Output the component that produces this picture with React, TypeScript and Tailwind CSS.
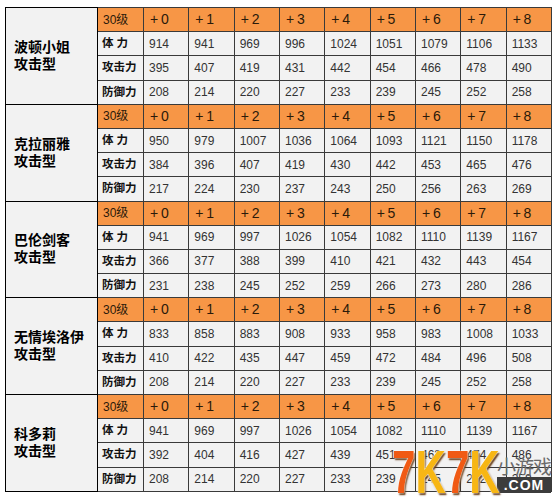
import { Fragment } from "react";

const levels = ["+0", "+1", "+2", "+3", "+4", "+5", "+6", "+7", "+8"];

interface Hero {
  name: string;
  hp: number[];
  atk: number[];
  def: number[];
}

const heroes: Hero[] = [
  {
    name: "波顿小姐",
    hp: [914, 941, 969, 996, 1024, 1051, 1079, 1106, 1133],
    atk: [395, 407, 419, 431, 442, 454, 466, 478, 490],
    def: [208, 214, 220, 227, 233, 239, 245, 252, 258],
  },
  {
    name: "克拉丽雅",
    hp: [950, 979, 1007, 1036, 1064, 1093, 1121, 1150, 1178],
    atk: [384, 396, 407, 419, 430, 442, 453, 465, 476],
    def: [217, 224, 230, 237, 243, 250, 256, 263, 269],
  },
  {
    name: "巴伦剑客",
    hp: [941, 969, 997, 1026, 1054, 1082, 1110, 1139, 1167],
    atk: [366, 377, 388, 399, 410, 421, 432, 443, 454],
    def: [231, 238, 245, 252, 259, 266, 273, 280, 286],
  },
  {
    name: "无情埃洛伊",
    hp: [833, 858, 883, 908, 933, 958, 983, 1008, 1033],
    atk: [410, 422, 435, 447, 459, 472, 484, 496, 508],
    def: [208, 214, 220, 227, 233, 239, 245, 252, 258],
  },
  {
    name: "科多莉",
    hp: [941, 969, 997, 1026, 1054, 1082, 1110, 1139, 1167],
    atk: [392, 404, 416, 427, 439, 451, 463, 474, 486],
    def: [208, 214, 220, 227, 233, 239, 245, 252, 258],
  },
];

const cell = "border border-[#3a3a3a] px-[5px] py-0 text-left align-middle whitespace-nowrap overflow-hidden";
const font = { fontFamily: '"Liberation Sans", "Noto Sans CJK SC", sans-serif' };

function StatRow({ label, values }: { label: string; values: number[] }) {
  return (
    <tr className="h-[24.2px]">
      <td
        className={`${cell} !px-[4px] bg-[#f2f2f2] font-bold text-[11.5px] text-[#111] ${label.length === 2 ? "tracking-[3px]" : "tracking-[0px]"}`}
      >
        {label}
      </td>
      {values.map((v, i) => (
        <td key={i} className={`${cell} bg-[#f2f2f2] text-[12px] text-[#333]`}>
          {v}
        </td>
      ))}
    </tr>
  );
}

function Logo() {
  return (
    <div className="absolute left-[392px] top-[446px] flex items-end">
      <div className="w-[104px] h-[52px] overflow-visible">
        <div
          className="origin-top-left scale-x-[0.68] whitespace-nowrap text-[62px] leading-[52px] font-black [text-shadow:0_0_2px_#fff,0_0_2px_#fff,2px_2px_2px_#5a2a00]"
          style={{ fontFamily: '"Liberation Sans", sans-serif' }}
        >
          <span className="text-[#f05a14]">7</span>
          <span className="text-[#f7b614]">K</span>
          <span className="text-[#f05a14]">7</span>
          <span className="text-[#f7b614]">K</span>
        </div>
      </div>
      <div className="flex flex-col items-stretch mb-[5px] ml-[1px]">
        <span
          className="text-[19px] leading-[22px] text-[#6a6a6a] tracking-[-1px]"
          style={{ fontFamily: '"Noto Sans CJK SC", sans-serif' }}
        >
          小游戏
        </span>
        <span className="bg-[#3c3c3c] text-white text-[14px] leading-[16px] font-bold text-center tracking-[1px] px-[2px]">
          .COM
        </span>
      </div>
    </div>
  );
}

export default function App() {
  return (
    <div className="relative w-[560px] h-[499px] bg-white pl-[5px] pt-[7px] overflow-hidden" style={font}>
      <table className="table-fixed border-collapse border border-black w-[547px]">
        <colgroup>
          <col className="w-[92px]" />
          <col className="w-[46px]" />
          {levels.map((l) => (
            <col key={l} />
          ))}
        </colgroup>
        <tbody>
          {heroes.map((h) => (
            <Fragment key={h.name}>
              <tr className="h-[24.2px]">
                <td
                  rowSpan={4}
                  className="border border-black bg-[#f2f2f2] pl-[8px] pr-1 align-middle text-[14px] leading-[17px] font-bold text-black"
                >
                  {h.name}
                  <br />
                  攻击型
                </td>
                <td className={`${cell} bg-[#f79646] text-[12px] text-[#2b1a0a]`}>30级</td>
                {levels.map((l) => (
                  <td key={l} className={`${cell} bg-[#f79646] text-[14px] text-[#2b1a0a] pl-[6px]`}>
                    {l.replace("+", "+\u2009")}
                  </td>
                ))}
              </tr>
              <StatRow label="体力" values={h.hp} />
              <StatRow label="攻击力" values={h.atk} />
              <StatRow label="防御力" values={h.def} />
            </Fragment>
          ))}
        </tbody>
      </table>
      <Logo />
    </div>
  );
}
